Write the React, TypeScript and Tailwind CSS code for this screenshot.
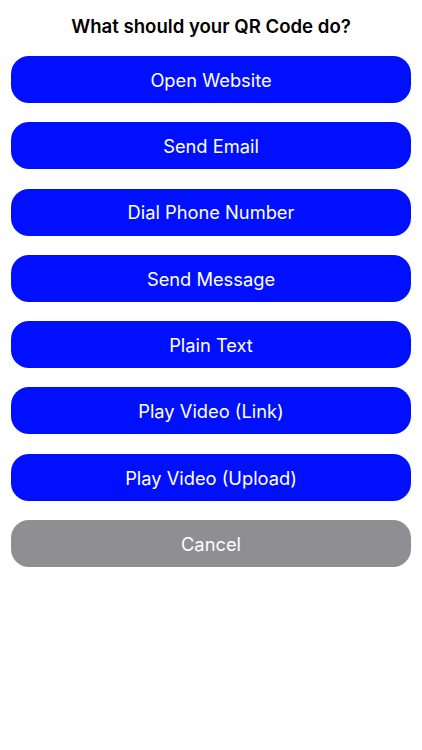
import React from "react";

const items = [
  "Open Website",
  "Send Email",
  "Dial Phone Number",
  "Send Message",
  "Plain Text",
  "Play Video (Link)",
  "Play Video (Upload)",
];

export default function App() {
  return (
    <div
      className="w-[422px] h-[750px] bg-white"
      style={{ fontFamily: "Inter, 'Liberation Sans', sans-serif" }}
    >
      <div className="h-[56px] pt-[14px] text-center text-[18.6px] leading-[24px] font-semibold text-black">
        What should your QR Code do?
      </div>
      <div className="flex flex-col gap-[19.3px] px-[11px]">
        {items.map((t) => (
          <div
            key={t}
            className="h-[47px] pt-[2px] rounded-[18px] bg-[#0010ff] flex items-center justify-center text-white text-[18.3px]"
          >
            {t}
          </div>
        ))}
        <div className="h-[47px] pt-[2px] rounded-[18px] bg-[#8e8e93] flex items-center justify-center text-white text-[18.3px]">
          Cancel
        </div>
      </div>
    </div>
  );
}
